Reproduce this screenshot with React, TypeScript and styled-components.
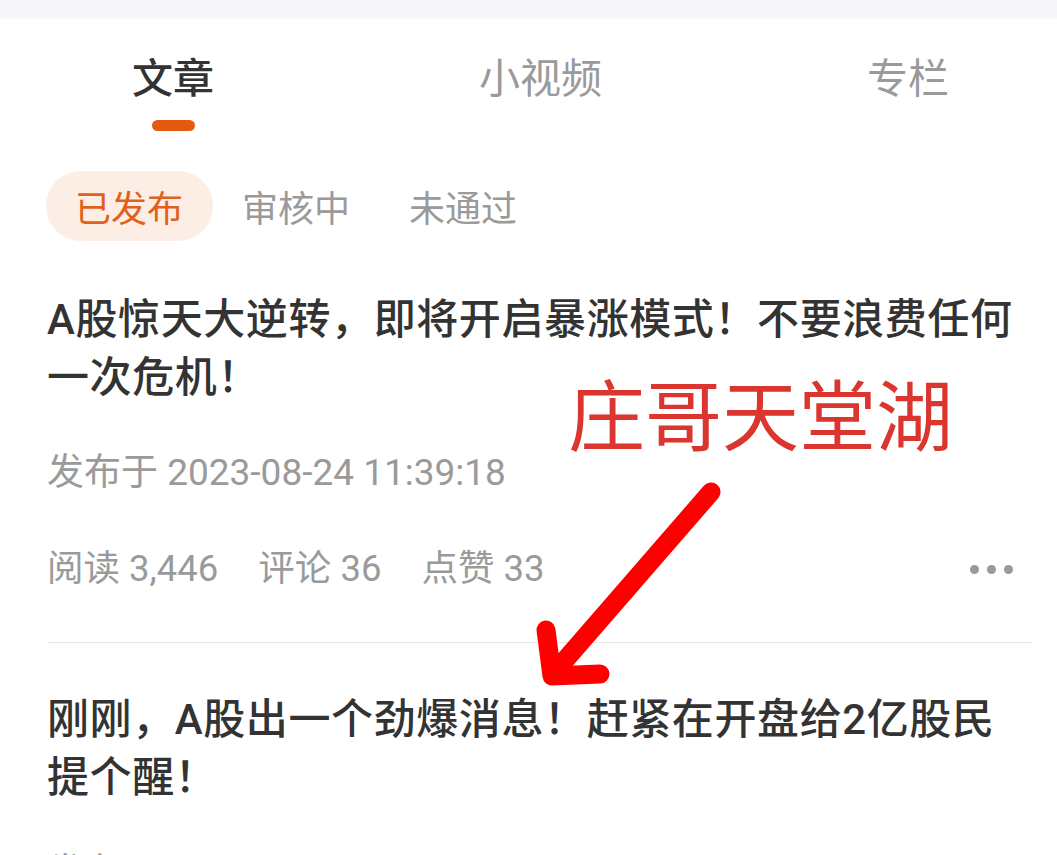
import React from 'react';
import styled, { createGlobalStyle } from 'styled-components';

const GlobalStyle = createGlobalStyle`
  html, body {
    margin: 0;
    padding: 0;
    background: #ffffff;
  }
  body {
    font-family: Roboto, "Noto Sans CJK SC", sans-serif;
    overflow: hidden;
  }
`;

const Page = styled.div`
  position: relative;
  width: 1057px;
  height: 855px;
  overflow: hidden;
  background: #ffffff;
`;

const StatusStrip = styled.div`
  height: 19px;
  background: #f7f7f9;
`;

const TabBar = styled.div`
  display: flex;
  justify-content: space-between;
  padding: 30px 108px 0 132px;
`;

const Tab = styled.div`
  display: flex;
  flex-direction: column;
  align-items: center;
`;

const TabLabel = styled.span<{ $active?: boolean }>`
  font-size: 41px;
  line-height: 60px;
  font-weight: ${(p) => (p.$active ? 500 : 400)};
  color: ${(p) => (p.$active ? '#333333' : '#9a9a9a')};
`;

const TabIndicator = styled.div<{ $active?: boolean }>`
  margin-top: 11px;
  width: 43px;
  height: 11px;
  border-radius: 6px;
  background: ${(p) => (p.$active ? '#e55a10' : 'transparent')};
`;

const FilterRow = styled.div`
  display: flex;
  margin: 40px 0 0 46px;
`;

const FilterPill = styled.div<{ $active?: boolean }>`
  height: 70px;
  padding: 0 30px 0 29px;
  border-radius: 35px;
  display: flex;
  align-items: center;
  font-size: 36px;
  color: ${(p) => (p.$active ? '#e0601c' : '#9a9a9a')};
  background: ${(p) => (p.$active ? '#fdeee5' : 'transparent')};
`;

const List = styled.div`
  padding: 0 24px 0 47px;
`;

const Article = styled.div<{ $first?: boolean }>`
  padding-top: ${(p) => (p.$first ? 50 : 48)}px;
  border-top: ${(p) => (p.$first ? 'none' : '1px solid #e6e6e6')};
`;

const Title = styled.div`
  font-size: 42px;
  line-height: 58px;
  font-weight: 500;
  letter-spacing: 0.6px;
  color: #333333;
`;

const Meta = styled.div`
  margin-top: 43px;
  font-size: 37px;
  line-height: 46px;
  color: #9a9a9a;
`;

const StatsRow = styled.div`
  margin: 50px 20px 0 0;
  padding-bottom: 50px;
  display: flex;
  align-items: center;
  justify-content: space-between;
`;

const Stats = styled.div`
  display: flex;
  gap: 40px;
  font-size: 36.5px;
  line-height: 46px;
  color: #9a9a9a;
`;

const More = styled.div`
  display: flex;
  gap: 8px;
`;

const Dot = styled.span`
  width: 9px;
  height: 9px;
  border-radius: 50%;
  background: #9a9a9a;
`;

const Watermark = styled.div`
  position: absolute;
  left: 568px;
  top: 366px;
  font-family: "Noto Sans CJK SC", sans-serif;
  font-size: 77px;
  line-height: 92px;
  color: #db3530;
  white-space: nowrap;
`;

const ArrowSvg = styled.svg`
  position: absolute;
  left: 0;
  top: 0;
  pointer-events: none;
`;

const articles = [
  {
    title: 'A股惊天大逆转，即将开启暴涨模式！不要浪费任何一次危机！',
    date: '发布于 2023-08-24 11:39:18',
    reads: '3,446',
    comments: '36',
    likes: '33',
  },
  {
    title: '刚刚，A股出一个劲爆消息！赶紧在开盘给2亿股民提个醒！',
    date: '发布于 2023-08-23 10:12:45',
    reads: '2,918',
    comments: '21',
    likes: '27',
  },
];

export default function App() {
  return (
    <Page>
      <GlobalStyle />
      <StatusStrip />
      <TabBar>
        <Tab>
          <TabLabel $active>文章</TabLabel>
          <TabIndicator $active />
        </Tab>
        <Tab>
          <TabLabel>小视频</TabLabel>
          <TabIndicator />
        </Tab>
        <Tab>
          <TabLabel>专栏</TabLabel>
          <TabIndicator />
        </Tab>
      </TabBar>
      <FilterRow>
        <FilterPill $active>已发布</FilterPill>
        <FilterPill>审核中</FilterPill>
        <FilterPill>未通过</FilterPill>
      </FilterRow>
      <List>
        {articles.map((a, i) => (
          <Article key={i} $first={i === 0}>
            <Title>{a.title}</Title>
            <Meta>{a.date}</Meta>
            <StatsRow>
              <Stats>
                <span>阅读 {a.reads}</span>
                <span>评论 {a.comments}</span>
                <span>点赞 {a.likes}</span>
              </Stats>
              <More>
                <Dot />
                <Dot />
                <Dot />
              </More>
            </StatsRow>
          </Article>
        ))}
      </List>
      <Watermark>庄哥天堂湖</Watermark>
      <ArrowSvg width="1057" height="855" viewBox="0 0 1057 855">
        <g stroke="#ff0000" strokeWidth="19" strokeLinecap="round" strokeLinejoin="round" fill="none">
          <line x1="711" y1="492" x2="553" y2="674" />
          <polyline points="546,630 552,676 600,674" />
        </g>
      </ArrowSvg>
    </Page>
  );
}
